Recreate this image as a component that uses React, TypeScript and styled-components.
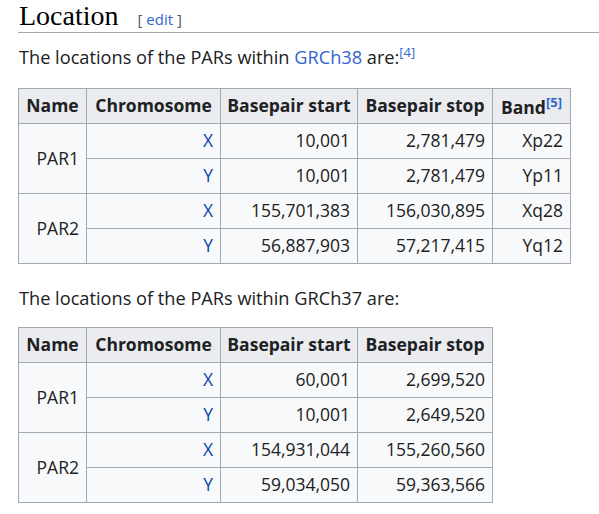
import React from "react";
import styled, { createGlobalStyle } from "styled-components";

const Global = createGlobalStyle`
  html, body { margin: 0; padding: 0; background: #fff; }
  body { font-family: "Open Sans", "Noto Sans", sans-serif; color: #202122; }
`;

const Page = styled.div`
  padding: 0 0 0 18px;
  width: 599px;
  box-sizing: border-box;
`;

const Heading = styled.h2`
  margin: 0;
  padding: 0 0 0 1px;
  height: 33px;
  box-sizing: border-box;
  border-bottom: 1px solid #a2a9b1;
  display: flex;
  align-items: baseline;
  gap: 19px;
  font-weight: normal;
`;

const Title = styled.span`
  font-family: "Liberation Serif", serif;
  font-size: 28px;
  line-height: 32px;
  color: #000;
`;

const Edit = styled.span`
  font-size: 15px;
  color: #54595d;
  a { color: #3366cc; text-decoration: none; }
`;

const Para = styled.p`
  margin: 0;
  padding-left: 1px;
  font-size: 18.2px;
  line-height: 24px;
  a { color: #3366cc; text-decoration: none; }
`;

const Sup = styled.sup`
  font-size: 13px;
  line-height: 1;
  color: #3366cc;
`;

const Table = styled.table`
  border-collapse: collapse;
  background: #f8f9fa;
  font-size: 17.5px;
  border: 1px solid #a2a9b1;
`;

const Th = styled.th<{ $w: number }>`
  width: ${(p) => p.$w}px;
  height: 35px;
  padding: 0;
  box-sizing: border-box;
  background: #eaecf0;
  border: 1px solid #a2a9b1;
  font-weight: bold;
  text-align: center;
  line-height: 1;
  white-space: nowrap;
`;

const Td = styled.td<{ $link?: boolean }>`
  height: 35px;
  padding: 0 7px 0 0;
  box-sizing: border-box;
  border: 1px solid #a2a9b1;
  text-align: right;
  line-height: 1;
  color: ${(p) => (p.$link ? "#0645ad" : "#202122")};
  white-space: nowrap;
`;

type Row = { chr: string; start: string; stop: string; band?: string };
type Group = { name: string; rows: Row[] };

const data38: Group[] = [
  {
    name: "PAR1",
    rows: [
      { chr: "X", start: "10,001", stop: "2,781,479", band: "Xp22" },
      { chr: "Y", start: "10,001", stop: "2,781,479", band: "Yp11" },
    ],
  },
  {
    name: "PAR2",
    rows: [
      { chr: "X", start: "155,701,383", stop: "156,030,895", band: "Xq28" },
      { chr: "Y", start: "56,887,903", stop: "57,217,415", band: "Yq12" },
    ],
  },
];

const data37: Group[] = [
  {
    name: "PAR1",
    rows: [
      { chr: "X", start: "60,001", stop: "2,699,520" },
      { chr: "Y", start: "10,001", stop: "2,649,520" },
    ],
  },
  {
    name: "PAR2",
    rows: [
      { chr: "X", start: "154,931,044", stop: "155,260,560" },
      { chr: "Y", start: "59,034,050", stop: "59,363,566" },
    ],
  },
];

const ParTable = ({ data, band }: { data: Group[]; band: boolean }) => (
  <Table>
    <thead>
      <tr>
        <Th $w={68}>Name</Th>
        <Th $w={134}>Chromosome</Th>
        <Th $w={137}>Basepair start</Th>
        <Th $w={135}>Basepair stop</Th>
        {band && (
          <Th $w={78}>
            Band<Sup>[5]</Sup>
          </Th>
        )}
      </tr>
    </thead>
    <tbody>
      {data.map((g) =>
        g.rows.map((r, i) => (
          <tr key={g.name + i}>
            {i === 0 && <Td rowSpan={2}>{g.name}</Td>}
            <Td $link>{r.chr}</Td>
            <Td>{r.start}</Td>
            <Td>{r.stop}</Td>
            {band && <Td>{r.band}</Td>}
          </tr>
        ))
      )}
    </tbody>
  </Table>
);

const Spacer = styled.div<{ $h: number }>`
  height: ${(p) => p.$h}px;
`;

export default function App() {
  return (
    <Page>
      <Global />
      <Heading>
        <Title>Location</Title>
        <Edit>
          [ <a>edit</a> ]
        </Edit>
      </Heading>
      <Spacer $h={12} />
      <Para>
        The locations of the PARs within <a>GRCh38</a> are:<Sup>[4]</Sup>
      </Para>
      <Spacer $h={19} />
      <ParTable data={data38} band />
      <Spacer $h={22} />
      <Para>The locations of the PARs within GRCh37 are:</Para>
      <Spacer $h={17} />
      <ParTable data={data37} band={false} />
    </Page>
  );
}
